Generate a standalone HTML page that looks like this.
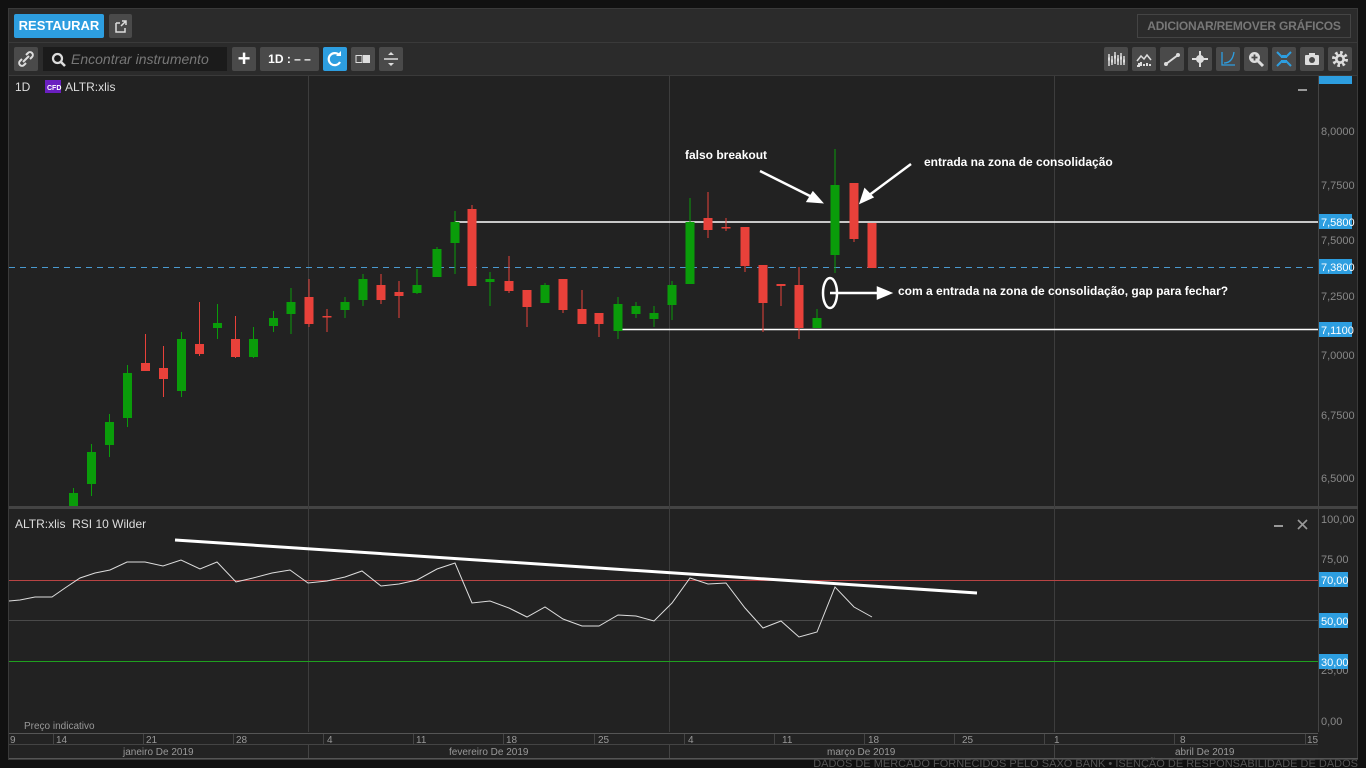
<!DOCTYPE html>
<html><head><meta charset="utf-8"><style>
body{margin:0;background:#111;width:1366px;height:768px;overflow:hidden;font-family:"Liberation Sans",sans-serif;position:relative}
.a{position:absolute}
.btn{position:absolute;background:#4a4a4a;border-radius:2px;height:24px;top:47px;color:#fff}
</style></head><body>
<div class="a" style="left:8px;top:8px;width:1350px;height:752px;background:#222;border:1px solid #3a3a3a;box-sizing:border-box"></div>
<div class="a" style="left:9px;top:9px;width:1348px;height:33px;background:#2b2b2b;border-bottom:1px solid #3a3a3a"></div>
<div class="a" style="left:14px;top:14px;width:90px;height:24px;background:#2d9ee0;border-radius:2px;color:#fff;font-weight:bold;font-size:13px;line-height:24px;text-align:center">RESTAURAR</div>
<div class="a" style="left:109px;top:14px;width:23px;height:24px;background:#4a4a4a;border-radius:2px"><svg width="23" height="24"><path d="M7 9h4M7 9v9h9v-4" stroke="#ddd" stroke-width="1.5" fill="none"/><path d="M12 12l5-5M13 7h4v4" stroke="#ddd" stroke-width="1.5" fill="none"/></svg></div>
<div class="a" style="left:1137px;top:14px;width:214px;height:24px;border:1px solid #444;box-sizing:border-box;color:#777;font-size:12px;font-weight:bold;line-height:22px;text-align:center;white-space:nowrap;letter-spacing:-0.2px">ADICIONAR/REMOVER GRÁFICOS</div>
<div class="a" style="left:9px;top:43px;width:1348px;height:32px;background:#2b2b2b;border-bottom:1px solid #3a3a3a"></div>
<div class="btn" style="left:14px;width:24px"><svg width="24" height="24"><path d="M9 15l6-6M8 12l-2 2a2.5 2.5 0 0 0 4 4l2-2M16 12l2-2a2.5 2.5 0 0 0-4-4l-2 2" stroke="#ddd" stroke-width="2" fill="none"/></svg></div>
<div class="a" style="left:43px;top:47px;width:184px;height:24px;background:#1b1b1b;color:#777;font-style:italic;font-size:14px;line-height:24px;text-indent:28px">Encontrar instrumento<svg class="a" style="left:8px;top:5px" width="16" height="16"><circle cx="6.5" cy="6.5" r="4.5" stroke="#ddd" stroke-width="2.2" fill="none"/><path d="M10 10l4 4" stroke="#ddd" stroke-width="2.6"/></svg></div>
<div class="btn" style="left:232px;width:24px;font-size:22px;line-height:24px;text-align:center;font-weight:bold">+</div>
<div class="btn" style="left:260px;width:59px;font-size:12px;font-weight:bold;line-height:24px;text-align:center">1D : – –</div>
<div class="btn" style="left:323px;width:24px;background:#2d9ee0"><svg width="24" height="24"><path d="M16.5 8.5A6 6 0 1 0 17 15" stroke="#fff" stroke-width="2.2" fill="none"/><path d="M13 9h5V4z" fill="#fff"/></svg></div>
<div class="btn" style="left:351px;width:24px"><svg width="24" height="24"><rect x="5" y="8.5" width="6" height="7" stroke="#ddd" fill="none"/><rect x="12" y="8" width="7" height="8" fill="#ddd"/></svg></div>
<div class="btn" style="left:379px;width:24px"><svg width="24" height="24"><path d="M5 12h14" stroke="#ddd" stroke-width="1.5"/><path d="M9 8l3-3 3 3zM9 16l3 3 3-3z" fill="#ddd"/></svg></div>
<div class="btn" style="left:1104px;width:24px"><svg width="24" height="24" stroke="#ddd" stroke-width="1.5"><path d="M5 7v12M8 9v9M11 5v12M14 8v10M17 6v12M20 9v9"/><path d="M4 12h2M7 14h2M10 10h2M13 13h2M16 11h2M19 14h2" stroke-width="3"/></svg></div>
<div class="btn" style="left:1132px;width:24px"><svg width="24" height="24" stroke="#ddd" stroke-width="1.5" fill="none"><path d="M5 14l4-5 3 3 3-4 4 5"/><path d="M5 19h2v-3M9 19v-4M12 19v-2M15 19v-3M18 19v-2" stroke-width="2"/></svg></div>
<div class="btn" style="left:1160px;width:24px"><svg width="24" height="24"><path d="M6 17l12-9" stroke="#ddd" stroke-width="2"/><circle cx="6" cy="17" r="2" fill="#ddd"/><circle cx="18" cy="8" r="2" fill="#ddd"/></svg></div>
<div class="btn" style="left:1188px;width:24px"><svg width="24" height="24" stroke="#ddd" stroke-width="2"><path d="M12 4v16M4 12h16"/><circle cx="12" cy="12" r="3" fill="#ddd"/></svg></div>
<div class="btn" style="left:1216px;width:24px"><svg width="24" height="24"><path d="M6 5v13h13M8 16c6 0 9-4 10-11" stroke="#2d9ee0" stroke-width="1.3" fill="none"/></svg></div>
<div class="btn" style="left:1244px;width:24px"><svg width="24" height="24"><circle cx="10.5" cy="10.5" r="5.5" fill="#ddd"/><path d="M14 14l5 5" stroke="#ddd" stroke-width="3"/><path d="M10.5 7.5v6M7.5 10.5h6" stroke="#4a4a4a" stroke-width="1.8"/></svg></div>
<div class="btn" style="left:1272px;width:24px"><svg width="24" height="24" stroke="#2d9ee0" stroke-width="2"><path d="M5 5l5 5M19 5l-5 5M5 19l5-5M19 19l-5-5M9 10h2v-2M13 8v2h2M9 14h2v2M13 16v-2h2"/></svg></div>
<div class="btn" style="left:1300px;width:24px"><svg width="24" height="24"><rect x="5" y="8" width="14" height="10" rx="1" fill="#ddd"/><rect x="9" y="6" width="6" height="3" fill="#ddd"/><circle cx="12" cy="13" r="3" fill="#4a4a4a"/></svg></div>
<div class="btn" style="left:1328px;width:24px"><svg width="24" height="24"><circle cx="12" cy="12" r="6" fill="none" stroke="#ddd" stroke-width="4" stroke-dasharray="2.4 2.3"/><circle cx="12" cy="12" r="5" fill="#ddd"/><circle cx="12" cy="12" r="2.3" fill="#4a4a4a"/></svg></div>

<svg class="a" style="left:0;top:0" width="1366" height="768" font-family="Liberation Sans, sans-serif">
<line x1="1318.5" y1="76" x2="1318.5" y2="732" stroke="#444"/>
<line x1="9" y1="507.5" x2="1358" y2="507.5" stroke="#444" stroke-width="3"/>
<line x1="308.5" y1="76" x2="308.5" y2="732" stroke="#3d3d3d"/>
<line x1="669.5" y1="76" x2="669.5" y2="732" stroke="#3d3d3d"/>
<line x1="1054.5" y1="76" x2="1054.5" y2="732" stroke="#3d3d3d"/>
<g fill="#888" font-size="11">
<text x="1321" y="135">8,0000</text><text x="1321" y="189">7,7500</text><text x="1321" y="244">7,5000</text><text x="1321" y="300">7,2500</text><text x="1321" y="359">7,0000</text><text x="1321" y="419">6,7500</text><text x="1321" y="482">6,5000</text>
<text x="1321" y="523">100,00</text><text x="1321" y="563">75,00</text><text x="1321" y="674">25,00</text><text x="1321" y="725">0,00</text>
</g>
<rect x="1319" y="76" width="33" height="8" fill="#2d9ee0"/>
<g font-size="11" fill="#fff">
<rect x="1319" y="214" width="33" height="15" fill="#2d9ee0"/><text x="1321" y="226">7,5800</text>
<rect x="1319" y="259" width="33" height="15" fill="#2d9ee0"/><text x="1321" y="271">7,3800</text>
<rect x="1319" y="322" width="33" height="15" fill="#2d9ee0"/><text x="1321" y="334">7,1100</text>
<rect x="1319" y="572" width="29" height="15" fill="#2d9ee0"/><text x="1321" y="584">70,00</text>
<rect x="1319" y="613" width="29" height="15" fill="#2d9ee0"/><text x="1321" y="625">50,00</text>
<rect x="1319" y="654" width="29" height="15" fill="#2d9ee0"/><text x="1321" y="666">30,00</text>
</g>
<text x="15" y="91" fill="#ddd" font-size="12">1D</text>
<rect x="45" y="80" width="16" height="13" fill="#6a1fc0"/><text x="47" y="90" fill="#fff" font-size="7" font-weight="bold">CFD</text>
<text x="65" y="91" fill="#ddd" font-size="12">ALTR:xlis</text>
<rect x="1298" y="89" width="9" height="2" fill="#999"/>
<line x1="9" y1="267.5" x2="1318" y2="267.5" stroke="#4a9ad0" stroke-dasharray="6 5"/>
<line x1="455" y1="222" x2="1318" y2="222" stroke="#fff" stroke-width="1.5"/>
<line x1="618" y1="329.5" x2="1318" y2="329.5" stroke="#fff" stroke-width="1.5"/>
<g id="c"></g>
<g fill="#fff" font-size="12" font-weight="bold">
<text x="685" y="159">falso breakout</text>
<text x="924" y="166">entrada na zona de consolidação</text>
<text x="898" y="295">com a entrada na zona de consolidação, gap para fechar?</text>
</g>
<g stroke="#fff" stroke-width="2.5" fill="#fff">
<line x1="760" y1="171" x2="812" y2="197"/><path d="M821 202l-13-1 5-8z"/>
<line x1="911" y1="164" x2="868" y2="196"/><path d="M861 202l4-12 7 7z"/>
<line x1="830" y1="293" x2="880" y2="293"/><path d="M890 293l-12-5v10z"/>
<ellipse cx="830" cy="293" rx="7" ry="15" fill="none"/>
</g>
<text x="15" y="528" fill="#ddd" font-size="12">ALTR:xlis&#160; RSI 10 Wilder</text>
<rect x="1274" y="525" width="9" height="2" fill="#999"/>
<path d="M1298 520l9 9M1307 520l-9 9" stroke="#999" stroke-width="1.6"/>
<line x1="9" y1="580.5" x2="1318" y2="580.5" stroke="#b84444"/>
<line x1="9" y1="620.5" x2="1318" y2="620.5" stroke="#4a4a4a"/>
<line x1="9" y1="661.5" x2="1318" y2="661.5" stroke="#1fa01f"/>
<polyline fill="none" stroke="#ddd" stroke-width="1" points="9,601 20,600 35,597 52,597 65,588 80,578 95,573 110,570 127,562 145,562 163,566 181,560 200,569 217,562 236,582 253,578 272,573 290,570 308,583 327,581 345,577 362,571 381,586 399,584 417,580 437,569 455,563 472,603 490,601 509,608 527,617 545,607 563,619 582,626 599,626 618,615 636,616 654,621 672,603 690,578 708,584 726,583 745,608 763,628 781,621 799,637 817,632 835,587 854,607 872,617"/>
<line x1="175" y1="540" x2="977" y2="593" stroke="#fff" stroke-width="3"/>
<text x="24" y="729" fill="#999" font-size="10">Preço indicativo</text>
<rect x="9" y="733" width="1309" height="26" fill="#232323"/>
<line x1="9" y1="733.5" x2="1318" y2="733.5" stroke="#555"/>
<line x1="9" y1="744.5" x2="1318" y2="744.5" stroke="#444"/>
<line x1="9" y1="758.5" x2="1358" y2="758.5" stroke="#555"/>
<g stroke="#444"><line x1="53.5" y1="734" x2="53.5" y2="744"/><line x1="143.5" y1="734" x2="143.5" y2="744"/><line x1="233.5" y1="734" x2="233.5" y2="744"/><line x1="323.5" y1="734" x2="323.5" y2="744"/><line x1="413.5" y1="734" x2="413.5" y2="744"/><line x1="503.5" y1="734" x2="503.5" y2="744"/><line x1="594.5" y1="734" x2="594.5" y2="744"/><line x1="684.5" y1="734" x2="684.5" y2="744"/><line x1="774.5" y1="734" x2="774.5" y2="744"/><line x1="864.5" y1="734" x2="864.5" y2="744"/><line x1="954.5" y1="734" x2="954.5" y2="744"/><line x1="1044.5" y1="734" x2="1044.5" y2="744"/><line x1="1174.5" y1="734" x2="1174.5" y2="744"/><line x1="1305.5" y1="734" x2="1305.5" y2="744"/>
<line x1="308.5" y1="745" x2="308.5" y2="758"/><line x1="669.5" y1="745" x2="669.5" y2="758"/><line x1="1054.5" y1="745" x2="1054.5" y2="758"/></g>
<g fill="#999" font-size="10">
<text x="10" y="743">9</text><text x="56" y="743">14</text><text x="146" y="743">21</text><text x="236" y="743">28</text><text x="327" y="743">4</text><text x="416" y="743">11</text><text x="506" y="743">18</text><text x="598" y="743">25</text><text x="688" y="743">4</text><text x="782" y="743">11</text><text x="868" y="743">18</text><text x="962" y="743">25</text><text x="1054" y="743">1</text><text x="1180" y="743">8</text><text x="1307" y="743">15</text>
<text x="123" y="755">janeiro De 2019</text><text x="449" y="755">fevereiro De 2019</text><text x="827" y="755">março De 2019</text><text x="1175" y="755">abril De 2019</text>
</g>
<text x="1358" y="767" fill="#555" font-size="11" text-anchor="end">DADOS DE MERCADO FORNECIDOS PELO SAXO BANK • ISENÇÃO DE RESPONSABILIDADE DE DADOS</text>
</svg>
<script>
var d=[[73.5,488,506,493,506,1],[91.5,444,496,452,484,1],[109.5,414,457,422,445,1],[127.5,365,427,373,418,1],[145.5,334,371,363,371,0],[163.5,346,397,368,379,0],[181.5,332,397,339,391,1],[199.5,302,356,344,354,0],[217.5,304,339,323,328,1],[235.5,316,358,339,357,0],[253.5,327,358,339,357,1],[273.5,311,332,318,326,1],[291,288,334,302,314,1],[309,279,327,297,324,0],[327,309,332,316,317,0],[345,297,318,302,310,1],[363,274,306,279,300,1],[381,274,304,285,300,0],[399,281,318,292,296,0],[417,269,294,285,293,1],[437,247,277,249,277,1],[455,211,274,222,243,1],[472,205,286,209,286,0],[490,272,306,279,282,1],[509,256,293,281,291,0],[527,290,327,290,307,0],[545,283,303,285,303,1],[563,279,313,279,310,0],[582,290,324,309,324,0],[599,313,337,313,324,0],[618,297,339,304,331,1],[636,302,318,306,314,1],[654,306,327,313,319,1],[672,281,320,285,305,1],[690,198,284,222,284,1],[708,192,238,218,230,0],[726,218,231,227,228,0],[745,227,272,227,266,0],[763,265,332,265,303,0],[781,286,306,284,286,0],[799,267,339,285,328,0],[817,309,328,318,328,1],[835,149,273,185,255,1],[854,183,242,183,239,0],[872,223,268,223,268,0]];
var s='';d.forEach(function(c){var col=c[5]?'#0a9c0a':'#e8413a';s+='<line x1="'+c[0]+'" x2="'+c[0]+'" y1="'+c[1]+'" y2="'+c[2]+'" stroke="'+col+'"/><rect x="'+(c[0]-4.5)+'" y="'+c[3]+'" width="9" height="'+Math.max(1.5,c[4]-c[3])+'" fill="'+col+'"/>';});
document.getElementById('c').innerHTML=s;
</script>
</body></html>
